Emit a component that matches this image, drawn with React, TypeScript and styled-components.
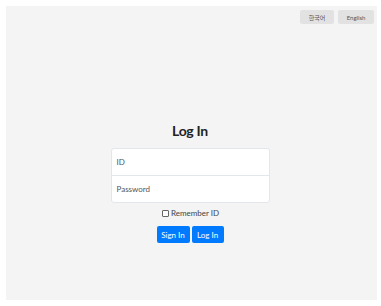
import React from "react";
import styled, { createGlobalStyle } from "styled-components";

const Global = createGlobalStyle`
  html, body { margin: 0; padding: 0; background: #ffffff; }
  body { font-family: Lato, "Noto Sans", "Noto Sans CJK KR", sans-serif; }
  * { box-sizing: border-box; }
`;

const Page = styled.div`
  padding: 6px 4px 6px 6px;
`;

const Panel = styled.div`
  height: 294px;
  background: #f4f4f4;
  padding: 4px 3px 0 0;
  display: flex;
  flex-direction: column;
`;

const LangBar = styled.div`
  display: flex;
  justify-content: flex-end;
  gap: 4px;
`;

const LangButton = styled.button<{ $w: number }>`
  width: ${(p) => p.$w}px;
  height: 14px;
  border: none;
  border-radius: 2px;
  background: #e2e2e2;
  color: #555;
  font-family: Lato, "Noto Sans CJK KR", sans-serif;
  font-size: 6px;
  padding: 0;
  display: flex;
  align-items: center;
  justify-content: center;
`;

const Form = styled.div`
  margin-top: 98px;
  display: flex;
  flex-direction: column;
  align-items: center;
`;

const Title = styled.h1`
  margin: 0;
  font-family: Lato, sans-serif;
  font-weight: 700;
  font-size: 14px;
  line-height: 18px;
  letter-spacing: -0.3px;
  color: #222;
`;

const InputGroup = styled.div`
  margin-top: 8px;
  width: 159px;
  background: #fff;
  border: 1px solid #e3e6ea;
  border-radius: 3px;
  display: flex;
  flex-direction: column;
`;

const Field = styled.div<{ $last?: boolean }>`
  height: ${(p) => (p.$last ? 26 : 27)}px;
  display: flex;
  align-items: center;
  padding-left: 5px;
  font-size: 8px;
  color: #555;
  border-bottom: ${(p) => (p.$last ? "none" : "1px solid #e3e6ea")};
`;

const Remember = styled.label`
  margin-top: 5px;
  display: flex;
  align-items: center;
  gap: 2px;
  font-size: 8px;
  color: #444;
  padding-left: 1px;
`;

const Check = styled.span`
  width: 7px;
  height: 7px;
  border: 1px solid #666;
  border-radius: 1px;
  background: #fff;
  display: inline-block;
`;

const Buttons = styled.div`
  margin-top: 8px;
  display: flex;
  gap: 2px;
`;

const PrimaryButton = styled.button<{ $w: number }>`
  width: ${(p) => p.$w}px;
  height: 17px;
  border: none;
  border-radius: 2px;
  background: #007bff;
  color: #fff;
  font-family: Lato, sans-serif;
  font-size: 8px;
  padding: 0;
`;

export default function App() {
  return (
    <>
      <Global />
      <Page>
        <Panel>
          <LangBar>
            <LangButton $w={34}>한국어</LangButton>
            <LangButton $w={36}>English</LangButton>
          </LangBar>
          <Form>
            <Title>Log In</Title>
            <InputGroup>
              <Field>ID</Field>
              <Field $last>Password</Field>
            </InputGroup>
            <Remember>
              <Check />
              Remember ID
            </Remember>
            <Buttons>
              <PrimaryButton $w={33}>Sign In</PrimaryButton>
              <PrimaryButton $w={32}>Log In</PrimaryButton>
            </Buttons>
          </Form>
        </Panel>
      </Page>
    </>
  );
}
